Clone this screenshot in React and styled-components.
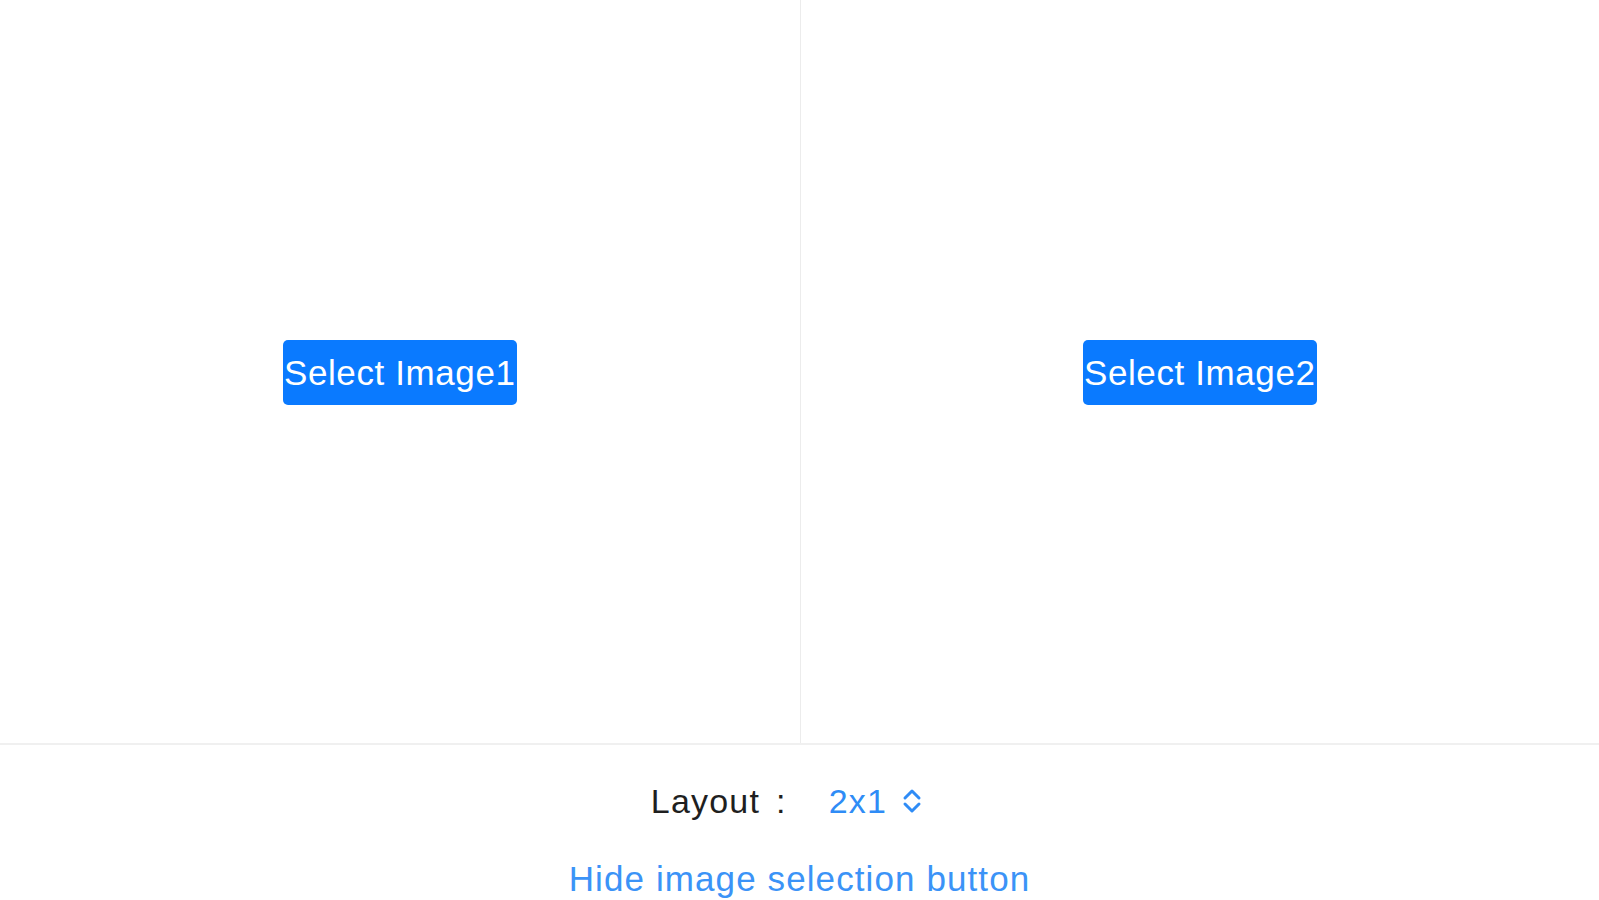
import styled, { createGlobalStyle } from "styled-components";

const GlobalStyle = createGlobalStyle`
  html, body {
    margin: 0;
    padding: 0;
    background: #ffffff;
    font-family: "Liberation Sans", Arial, sans-serif;
  }
`;

const Screen = styled.div`
  width: 1599px;
  height: 900px;
  display: flex;
  flex-direction: column;
  overflow: hidden;
  background: #ffffff;
`;

const Panes = styled.div`
  height: 743px;
  display: grid;
  grid-template-columns: 1fr 1fr;
  border-bottom: 2px solid #f0f0f0;
`;

const Pane = styled.div`
  display: flex;
  align-items: center;
  justify-content: center;
  border-left: ${(p) => (p.$divided ? "1px solid #ececec" : "none")};
`;

const SelectButton = styled.button`
  border: none;
  border-radius: 5px;
  background: #0a7aff;
  color: #ffffff;
  font-family: "Liberation Sans", Arial, sans-serif;
  font-size: 35px;
  letter-spacing: 0.6px;
  height: 65px;
  padding: 0 1px;
  margin-top: 2px;
  cursor: pointer;
`;

const Controls = styled.div`
  flex: 1;
  display: flex;
  flex-direction: column;
  align-items: center;
  padding-top: 36px;
  gap: 38px;
`;

const LayoutRow = styled.div`
  display: flex;
  align-items: center;
  margin-right: 24px;
  font-size: 34px;
  letter-spacing: 1.2px;
  line-height: 40px;
`;

const Label = styled.span`
  color: #1f1f1f;
`;

const Colon = styled.span`
  color: #1f1f1f;
  margin: 0 42px 0 16px;
`;

const Value = styled.span`
  color: #2f8cf6;
  display: flex;
  align-items: center;
  gap: 13px;
`;

const LinkText = styled.span`
  color: #3b93f7;
  font-size: 35px;
  letter-spacing: 1.1px;
  line-height: 40px;
  cursor: pointer;
`;

const UpDown = () => (
  <svg width="24" height="30" viewBox="0 0 24 30" fill="none">
    <path
      d="M5 12 L12 5 L19 12 M5 18 L12 25 L19 18"
      stroke="#2f8cf6"
      strokeWidth="3"
      strokeLinecap="round"
      strokeLinejoin="round"
    />
  </svg>
);

export default function App() {
  return (
    <>
      <GlobalStyle />
      <Screen>
        <Panes>
          <Pane>
            <SelectButton>Select Image1</SelectButton>
          </Pane>
          <Pane $divided>
            <SelectButton>Select Image2</SelectButton>
          </Pane>
        </Panes>
        <Controls>
          <LayoutRow>
            <Label>Layout</Label>
            <Colon>:</Colon>
            <Value>
              2x1
              <UpDown />
            </Value>
          </LayoutRow>
          <LinkText>Hide image selection button</LinkText>
        </Controls>
      </Screen>
    </>
  );
}
